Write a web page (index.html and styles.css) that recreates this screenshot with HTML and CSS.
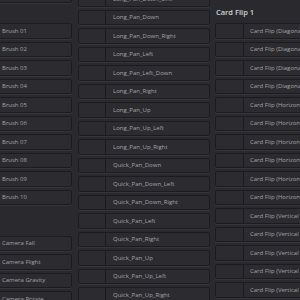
FILE: index.html
```html
<!DOCTYPE html>
<html>
<head>
<meta charset="utf-8">
<link rel="stylesheet" href="styles.css">
</head>
<body>
<div class="page">
  <div class="col col-a">
    <div class="item"></div>
    <div class="spacer-top"></div>
    <div class="item"><span>Brush 01</span></div>
    <div class="item"><span>Brush 02</span></div>
    <div class="item"><span>Brush 03</span></div>
    <div class="item"><span>Brush 04</span></div>
    <div class="item"><span>Brush 05</span></div>
    <div class="item"><span>Brush 06</span></div>
    <div class="item"><span>Brush 07</span></div>
    <div class="item"><span>Brush 08</span></div>
    <div class="item"><span>Brush 09</span></div>
    <div class="item"><span>Brush 10</span></div>
    <div class="spacer-mid"></div>
    <div class="item"><span>Camera Fall</span></div>
    <div class="item"><span>Camera Flight</span></div>
    <div class="item"><span>Camera Gravity</span></div>
    <div class="item"><span>Camera Rotate</span></div>
  </div>
  <div class="col col-b">
    <div class="card"><div class="thumb"></div><span>Long_Pan_Down_Left</span></div>
    <div class="card"><div class="thumb"></div><span>Long_Pan_Down</span></div>
    <div class="card"><div class="thumb"></div><span>Long_Pan_Down_Right</span></div>
    <div class="card"><div class="thumb"></div><span>Long_Pan_Left</span></div>
    <div class="card"><div class="thumb"></div><span>Long_Pan_Left_Down</span></div>
    <div class="card"><div class="thumb"></div><span>Long_Pan_Right</span></div>
    <div class="card"><div class="thumb"></div><span>Long_Pan_Up</span></div>
    <div class="card"><div class="thumb"></div><span>Long_Pan_Up_Left</span></div>
    <div class="card"><div class="thumb"></div><span>Long_Pan_Up_Right</span></div>
    <div class="card"><div class="thumb"></div><span>Quick_Pan_Down</span></div>
    <div class="card"><div class="thumb"></div><span>Quick_Pan_Down_Left</span></div>
    <div class="card"><div class="thumb"></div><span>Quick_Pan_Down_Right</span></div>
    <div class="card"><div class="thumb"></div><span>Quick_Pan_Left</span></div>
    <div class="card"><div class="thumb"></div><span>Quick_Pan_Right</span></div>
    <div class="card"><div class="thumb"></div><span>Quick_Pan_Up</span></div>
    <div class="card"><div class="thumb"></div><span>Quick_Pan_Up_Left</span></div>
    <div class="card"><div class="thumb"></div><span>Quick_Pan_Up_Right</span></div>
  </div>
  <div class="col col-c">
    <div class="header">Card Flip 1</div>
    <div class="card"><div class="thumb"></div><span>Card Flip (Diagonal 1)</span></div>
    <div class="card"><div class="thumb"></div><span>Card Flip (Diagonal 2)</span></div>
    <div class="card"><div class="thumb"></div><span>Card Flip (Diagonal 3)</span></div>
    <div class="card"><div class="thumb"></div><span>Card Flip (Diagonal 4)</span></div>
    <div class="card"><div class="thumb"></div><span>Card Flip (Horizontal 1)</span></div>
    <div class="card"><div class="thumb"></div><span>Card Flip (Horizontal 2)</span></div>
    <div class="card"><div class="thumb"></div><span>Card Flip (Horizontal 3)</span></div>
    <div class="card"><div class="thumb"></div><span>Card Flip (Horizontal 4)</span></div>
    <div class="card"><div class="thumb"></div><span>Card Flip (Horizontal 5)</span></div>
    <div class="card"><div class="thumb"></div><span>Card Flip (Horizontal 6)</span></div>
    <div class="card"><div class="thumb"></div><span>Card Flip (Vertical 1)</span></div>
    <div class="card"><div class="thumb"></div><span>Card Flip (Vertical 2)</span></div>
    <div class="card"><div class="thumb"></div><span>Card Flip (Vertical 3)</span></div>
    <div class="card"><div class="thumb"></div><span>Card Flip (Vertical 4)</span></div>
    <div class="card"><div class="thumb"></div><span>Card Flip (Vertical 5)</span></div>
  </div>
</div>
</body>
</html>
```
FILE: styles.css
```css
html, body {
  margin: 0;
  padding: 0;
  width: 300px;
  height: 300px;
  overflow: hidden;
  background: #29292e;
}
.page {
  display: flex;
  align-items: flex-start;
  gap: 6px;
  margin-left: -8px;
  font-family: "Open Sans", "Noto Sans", sans-serif;
  font-size: 6px;
  color: #a4a4aa;
}
.col {
  display: flex;
  flex-direction: column;
  gap: 3px;
  flex: none;
}
.col-a {
  width: 80px;
  margin-top: -13px;
}
.col-b {
  width: 132px;
  margin-top: -9px;
}
.col-c {
  width: 130px;
  margin-left: -1px;
}
.spacer-top {
  height: 14.5px;
}
.spacer-mid {
  height: 24.5px;
}
.item, .card {
  box-sizing: border-box;
  height: 15.5px;
  border: 1px solid #1c1c20;
  border-radius: 2px;
  background: #2b2b30;
  box-shadow: 0 1px 0 #35353a;
  display: flex;
  align-items: center;
  white-space: nowrap;
  overflow: hidden;
}
.item span {
  padding-left: 9px;
}
.card .thumb {
  flex: none;
  width: 26px;
  height: 100%;
  border-right: 1px solid #1c1c20;
}
.card span {
  padding-left: 7px;
}
.col-c .card .thumb {
  width: 27px;
}
.col-c .card span {
  padding-left: 6px;
}
.header {
  box-sizing: border-box;
  height: 20px;
  padding-top: 3px;
  display: flex;
  align-items: center;
  font-size: 7.5px;
  font-weight: 600;
  color: #d4d4d8;
  padding-left: 1px;
}
```
